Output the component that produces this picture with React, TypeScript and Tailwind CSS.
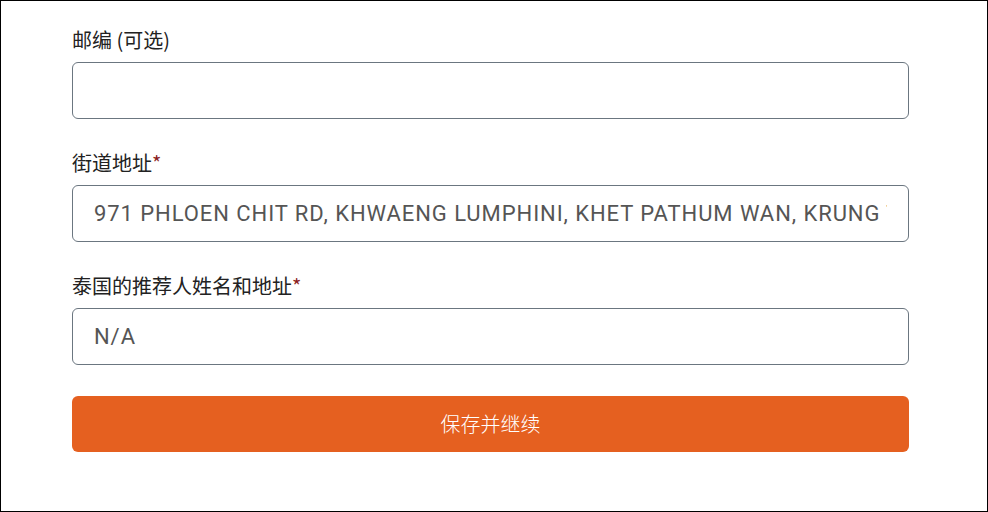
import React from "react";

const labelCls =
  "block h-[24px] leading-[24px] text-[20px] text-[#222222] [font-family:'Noto_Sans_CJK_SC','Noto_Sans',sans-serif]";
const inputCls =
  "mt-[10px] block w-full h-[57px] rounded-[6px] border border-[#6b7680] bg-white px-[21px] text-[22px] tracking-[0.93px] text-[#555555] outline-none [font-family:Roboto,'Noto_Sans_CJK_SC',sans-serif]";

export default function App() {
  return (
    <div className="w-[988px] h-[512px] box-border border border-black bg-white overflow-hidden">
      <div className="ml-[71px] w-[837px] pt-[27px] flex flex-col">
        <label className={labelCls}>邮编 (可选)</label>
        <input className={inputCls} defaultValue="" readOnly />

        <label className={labelCls + " mt-[32px]"}>
          街道地址<span className="text-[#8b1e1e]">*</span>
        </label>
        <input
          className={inputCls}
          defaultValue="971 PHLOEN CHIT RD, KHWAENG LUMPHINI, KHET PATHUM WAN, KRUNG THEP MAHA NAKHON 10330"
          readOnly
        />

        <label className={labelCls + " mt-[32px]"}>
          泰国的推荐人姓名和地址<span className="text-[#8b1e1e]">*</span>
        </label>
        <input className={inputCls} defaultValue="N/A" readOnly />

        <button className="mt-[31px] h-[56px] w-full rounded-[6px] bg-[#e56020] text-white text-[20px] font-light [font-family:'Noto_Sans_CJK_SC',sans-serif]">
          保存并继续
        </button>
      </div>
    </div>
  );
}
